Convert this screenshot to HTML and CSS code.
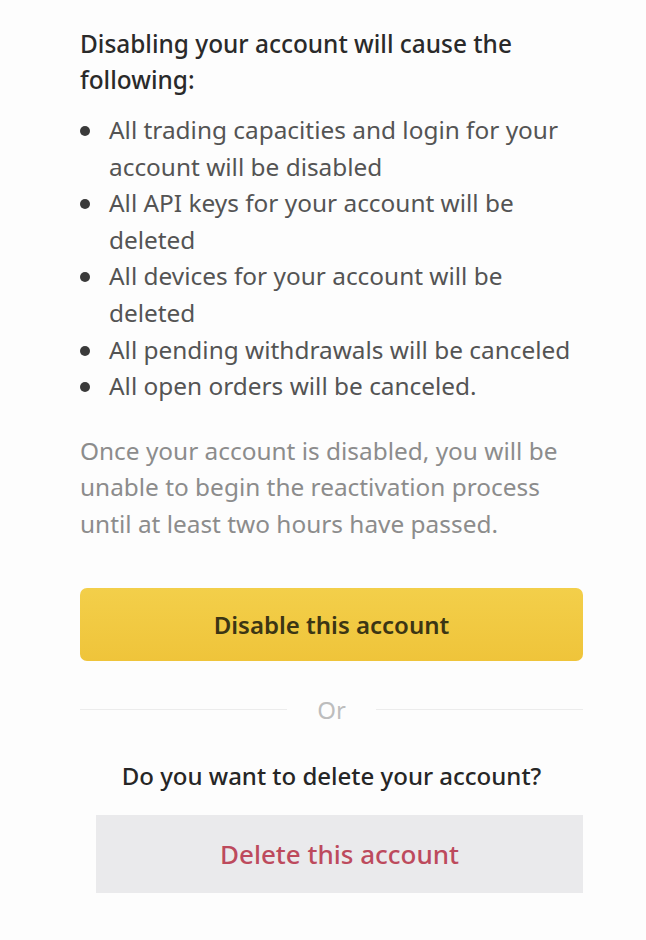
FILE: index.html
```html
<!DOCTYPE html>
<html>
<head>
<meta charset="utf-8">
<link rel="stylesheet" href="styles.css">
</head>
<body>
<main class="page">
  <h1 class="title">Disabling your account will cause the following:</h1>
  <ul class="effects">
    <li>All trading capacities and login for your account will be disabled</li>
    <li>All API keys for your account will be deleted</li>
    <li>All devices for your account will be deleted</li>
    <li>All pending withdrawals will be canceled</li>
    <li>All open orders will be canceled.</li>
  </ul>
  <p class="note">Once your account is disabled, you will be unable to begin the reactivation process until at least two hours have passed.</p>
  <button class="btn-disable">Disable this account</button>
  <div class="divider"><span class="line"></span><span class="or">Or</span><span class="line"></span></div>
  <p class="question">Do you want to delete your account?</p>
  <div class="delete-row"><button class="btn-delete">Delete this account</button></div>
</main>
</body>
</html>
```

FILE: styles.css
```css
* { box-sizing: border-box; }
html, body { margin: 0; padding: 0; background: #fdfdfd; }
body { font-family: "Noto Sans", "Open Sans", sans-serif; }
.page { width: 646px; height: 940px; padding: 26px 63px 0 80px; }
.title { margin: 0; font-size: 24.4px; font-weight: 500; line-height: 36px; color: #2a2a2a; }
.effects { list-style: none; margin: 14px 0 0 0; padding: 0; }
.effects li { position: relative; padding-left: 29px; font-size: 24.4px; line-height: 36.6px; color: #545454; }
.effects li::before { content: ""; position: absolute; left: 0; top: 14px; width: 10px; height: 10px; border-radius: 50%; background: #3a3a3a; }
.note { margin: 28px 0 0 0; font-size: 24.4px; line-height: 36.6px; color: #8c8c8c; }
.btn-disable { display: block; width: 503px; height: 73px; margin-top: 45px; border: none; border-radius: 7px; background: linear-gradient(#f3cf4a, #efc43a); font-family: inherit; font-size: 24px; font-weight: 600; color: #3b3514; }
.divider { display: flex; align-items: center; gap: 30px; margin-top: 31px; width: 503px; }
.divider .line { flex: 1; height: 1px; background: #ececec; }
.divider .or { font-size: 24px; color: #bdbdbd; line-height: 36px; }
.question { margin: 30px 0 0 0; width: 503px; text-align: center; font-size: 24px; font-weight: 500; line-height: 36px; color: #262626; }
.delete-row { display: flex; justify-content: flex-end; width: 503px; margin-top: 21px; }
.btn-delete { width: 487px; height: 78px; border: none; border-radius: 0; background: #eaeaec; font-family: inherit; font-size: 26px; font-weight: 500; color: #bd4a5d; }
```
